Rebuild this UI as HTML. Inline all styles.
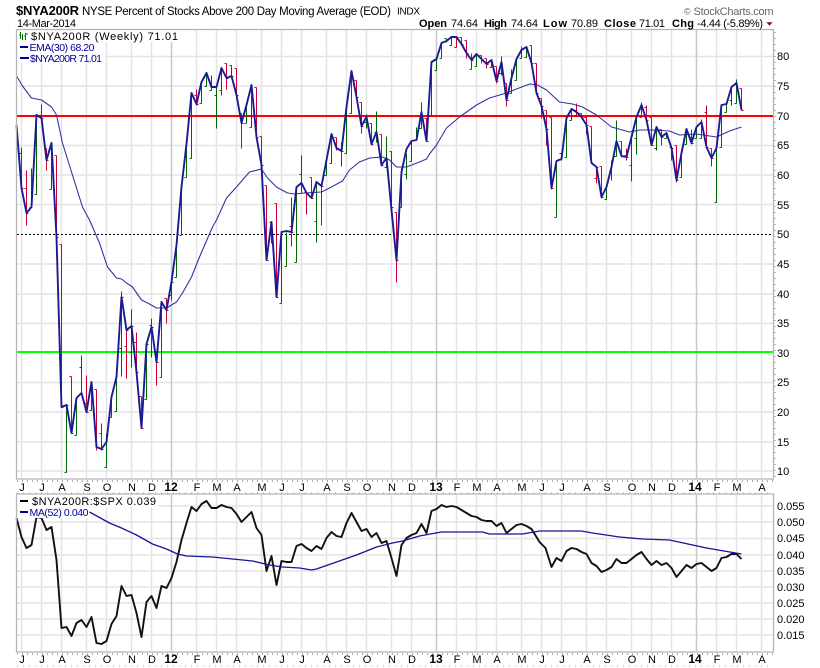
<!DOCTYPE html>
<html>
<head>
<meta charset="utf-8">
<title>$NYA200R</title>
<style>
html,body{margin:0;padding:0;background:#fff}
svg{display:block}
text{font-family:"Liberation Sans",Arial,sans-serif;font-size:11px;fill:#000}
</style>
</head>
<body>
<svg width="820" height="668" viewBox="0 0 820 668" xmlns="http://www.w3.org/2000/svg">
<rect width="820" height="668" fill="#fff"/>
<!-- grid -->
<path fill="none" stroke="#e4e4e4" stroke-width="1.5" d="M21.5 30V478M41.5 30V478M61.5 30V478M86.5 30V478M106.5 30V478M131.5 30V478M151.5 30V478M196.5 30V478M216.5 30V478M236.5 30V478M261.5 30V478M281.5 30V478M301.5 30V478M326.5 30V478M346.5 30V478M366.5 30V478M391.5 30V478M411.5 30V478M456.5 30V478M476.5 30V478M496.5 30V478M521.5 30V478M541.5 30V478M561.5 30V478M586.5 30V478M606.5 30V478M631.5 30V478M651.5 30V478M671.5 30V478M716.5 30V478M736.5 30V478M761.5 30V478
M21.5 495V651M41.5 495V651M61.5 495V651M86.5 495V651M106.5 495V651M131.5 495V651M151.5 495V651M196.5 495V651M216.5 495V651M236.5 495V651M261.5 495V651M281.5 495V651M301.5 495V651M326.5 495V651M346.5 495V651M366.5 495V651M391.5 495V651M411.5 495V651M456.5 495V651M476.5 495V651M496.5 495V651M521.5 495V651M541.5 495V651M561.5 495V651M586.5 495V651M606.5 495V651M631.5 495V651M651.5 495V651M671.5 495V651M716.5 495V651M736.5 495V651M761.5 495V651
M17 56.5H773M17 86H773M17 145.5H773M17 175H773M17 204.5H773M17 264H773M17 294H773M17 323.5H773M17 382.5H773M17 412H773M17 442H773M17 471H773
M17 506H773M17 522H773M17 538.5H773M17 555H773M17 571H773M17 587H773M17 603H773M17 619H773M17 635H773"/>
<path fill="none" stroke="#c8c8c8" stroke-width="1.5" d="M171.5 30V478M436.5 30V478M696.5 30V478M171.5 495V651M436.5 495V651M696.5 495V651"/>
<!-- thresholds -->
<path fill="none" stroke="#000" stroke-width="1" stroke-dasharray="2 2" d="M17 234.5H773"/>
<path fill="none" stroke="#ff0000" stroke-width="2" d="M16 116H773"/>
<path fill="none" stroke="#00ff00" stroke-width="2" d="M16 352H773"/>
<!-- bars -->
<g transform="translate(-.5,.5)" fill="none" stroke-width="1">
<path stroke="#cc0033" d="M17 124V130M22 147V188M20 153h2M22 188h2M27 170V225M25 188h2M27 213h2M42 104V120M40 115h2M42 118h2M47 148V170M45 148h2M47 160h2M57 155V237M55 155h2M57 237h2M62 244V407M60 244h2M62 407h2M72 376V433M70 376h2M72 433h2M87 375V412M85 403h2M87 412h2M97 389V450M95 389h2M97 447h2M102 423V450M100 433h2M102 449h2M127 330V378M125 346h2M127 330h2M137 332V372M135 342h2M137 372h2M142 396V428M140 396h2M142 428h2M157 351V385M155 351h2M157 362h2M167 298V323M165 298h2M167 310h2M197 89V105M195 95h2M197 104h2M227 63V89M225 63h2M227 78h2M237 68V97M235 68h2M237 95h2M242 113V148M240 113h2M242 123h2M257 87V137M255 87h2M257 137h2M262 136V167M260 136h2M262 165h2M267 185V260M265 185h2M267 260h2M277 203V297M275 203h2M277 297h2M292 197V246M290 226h2M292 232h2M307 192V214M305 192h2M307 193h2M312 177V198M310 177h2M312 198h2M322 185V225M320 185h2M322 186h2M337 137V150M335 137h2M337 148h2M342 142V166M340 150h2M342 151h2M357 80V97M355 80h2M357 97h2M362 102V133M360 102h2M362 126h2M372 123V145M370 123h2M372 144h2M382 134V166M380 134h2M382 165h2M392 151V207M390 151h2M392 207h2M397 212V282M395 212h2M397 260h2M427 118V141M425 118h2M427 141h2M457 37V47M455 47h2M457 37h2M462 37V45M460 37h2M462 44h2M467 40V58M465 40h2M467 53h2M472 53V69M470 69h2M472 60h2M482 55V63M480 55h2M482 59h2M487 58V68M485 58h2M487 64h2M497 66V83M495 66h2M497 81h2M507 83V106M505 83h2M507 100h2M532 45V63M530 45h2M532 63h2M537 63V93M535 63h2M537 93h2M542 98V118M540 98h2M542 106h2M547 110V145M545 110h2M547 129h2M552 117V189M550 117h2M552 188h2M577 103V115M575 110h2M577 112h2M582 113V118M580 113h2M582 117h2M587 117V134M585 117h2M587 125h2M592 126V163M590 126h2M592 163h2M597 167V183M595 178h2M597 167h2M602 166V198M600 166h2M602 197h2M622 141V157M620 141h2M622 156h2M627 148V160M625 155h2M627 157h2M647 105V120M645 107h2M647 120h2M652 117V145M650 117h2M652 145h2M662 129V145M660 129h2M662 137h2M672 145V160M670 147h2M672 148h2M677 145V182M675 145h2M677 180h2M692 129V144M690 137h2M692 143h2M707 105V147M705 112h2M707 147h2M712 148V166M710 148h2M712 158h2M742 88V110M740 88h2M742 110h2"/>
<path stroke="#006600" d="M32 168V207M30 207h2M37 115V194M35 194h2M52 143V189M50 189h2M67 405V472M65 472h2M67 405h2M77 398V435M75 435h2M82 355V393M80 367h2M92 381V410M90 410h2M107 433V467M105 467h2M112 397V417M110 417h2M117 377V411M115 411h2M122 291V376M120 348h2M122 297h2M132 309V367M130 352h2M132 326h2M147 344V399M145 399h2M147 344h2M152 318V357M150 325h2M152 327h2M162 302V377M160 377h2M172 282V300M170 295h2M172 282h2M177 244V277M175 277h2M182 187V235M180 235h2M187 143V177M185 177h2M192 93V158M190 158h2M202 82V103M200 103h2M207 73V86M205 86h2M212 75V90M210 90h2M217 87V128M215 95h2M222 68V95M220 90h2M232 65V78M230 65h2M232 76h2M247 105V123M245 123h2M252 85V127M250 127h2M272 222V243M270 222h2M282 232V303M280 303h2M287 232V266M285 266h2M297 187V262M295 262h2M302 155V193M300 174h2M317 182V242M315 221h2M327 157V175M325 175h2M332 134V163M330 163h2M347 107V153M345 153h2M352 71V113M350 113h2M367 114V128M365 122h2M377 111V142M375 132h2M387 136V167M385 167h2M402 172V207M400 207h2M407 153V179M405 174h2M412 141V161M410 161h2M417 127V140M415 140h2M422 102V128M420 128h2M432 62V115M430 115h2M437 58V70M435 70h2M442 43V58M440 58h2M447 38V42M445 38h2M452 37V45M450 45h2M477 54V66M475 66h2M492 60V67M490 67h2M502 56V75M500 73h2M512 69V93M510 93h2M517 59V80M515 80h2M522 46V58M520 58h2M527 46V57M525 57h2M557 162V217M555 217h2M562 153V160M560 153h2M567 118V157M565 157h2M572 109V120M570 120h2M607 187V199M605 199h2M612 160V180M610 170h2M617 120V156M615 156h2M632 137V181M630 165h2M637 117V154M635 138h2M642 102V117M640 117h2M657 127V150M655 148h2M667 132V138M665 138h2M682 153V177M680 177h2M687 129V144M685 144h2M697 127V138M695 138h2M702 119V138M700 138h2M717 148V202M715 202h2M722 105V147M720 147h2M727 103V112M725 112h2M732 87V105M730 100h2M737 79V103M735 103h2"/>
</g>
<g transform="translate(-.5,0)" fill="none" stroke-linejoin="round">
<!-- EMA -->
<polyline stroke="#34349f" stroke-width="1.1" points="17,76 23,86 32,98 42,100 52,107 57,115 63,143 72,172 83,207 90,220 100,243 108,267 117,278 122,279 127,283 133,287 142,300 150,304 157,308 167,308 177,302 183,293 192,277 200,257 213,227 217,220 227,198 237,187 250,172 262,169 268,178 277,187 288,193 295,194 305,193 322,192 332,187 343,181 350,170 360,162 370,158 383,157 390,160 397,167 407,167 420,162 427,159 430,154 437,145 447,128 460,117 477,105 490,98 507,93 517,89 530,84 538,85 547,90 560,102 573,104 583,107 597,115 612,127 630,132 640,130 653,130 670,131 680,135 697,134 717,137 730,131 742,127"/>
<!-- Close -->
<polyline stroke="#1a1a96" stroke-width="1.9" points="17,125 22,188 27,213 32,207 37,115 42,118 47,160 52,143 57,237 62,407 67,405 72,433 77,398 82,393 87,412 92,382 97,447 102,449 107,442 112,397 117,377 122,297 127,330 132,326 137,372 142,428 147,344 152,327 157,362 162,302 167,310 172,282 177,245 182,187 187,144 192,93 197,104 202,82 207,73 212,87 217,87 222,68 227,78 232,76 237,95 242,123 247,105 252,85 257,137 262,165 267,260 272,222 277,297 282,232 287,231 292,232 297,187 302,183 307,193 312,198 317,182 322,186 327,160 332,134 337,148 342,151 347,107 352,71 357,97 362,126 367,117 372,144 377,132 382,165 387,158 392,210 397,260 402,172 407,149 412,141 417,140 422,112 427,141 432,62 437,59 442,43 447,41 452,37 457,37 462,44 467,53 472,60 477,54 482,59 487,64 492,60 497,81 502,62 507,100 512,78 517,59 522,50 527,47 532,63 537,93 542,106 547,129 552,188 557,161 562,159 567,118 572,109 577,112 582,117 587,125 592,163 597,167 602,197 607,187 612,167 617,141 622,156 627,157 632,137 637,117 642,105 647,120 652,145 657,127 662,137 667,133 672,148 677,180 682,153 687,129 692,143 697,127 702,122 707,147 712,158 717,148 722,105 727,104 732,87 737,83 742,110"/>
<!-- ratio -->
<polyline stroke="#111" stroke-width="1.9" points="17,518 22,537 27,548 32,545 37,517 42,518 47,530 52,527 57,560 62,628 67,627 72,636 77,623 82,620 87,627 92,617 97,643 102,644 107,641 112,624 117,616 122,586 127,596 132,595 137,613 142,637 147,602 152,596 157,608 162,586 167,588 172,578 177,562 182,540 187,523 192,507 197,511 202,504 207,501 212,508 217,508 222,505 227,507 232,508 237,514 242,522 247,517 252,512 257,528 262,535 267,571 272,556 277,585 282,561 287,562 292,562 297,546 302,544 307,548 312,551 317,546 322,549 327,538 332,532 337,536 342,537 347,523 352,513 357,522 362,531 367,529 372,537 377,533 382,543 387,541 392,558 397,576 402,545 407,538 412,535 417,533 422,524 427,533 432,511 437,509 442,505 447,507 452,506 457,507 462,510 467,513 472,516 477,517 482,520 487,521 492,521 497,526 502,523 507,533 512,529 517,525 522,524 527,526 532,529 537,537 540,542 546,548 552,567 557,558 562,561 567,551 572,548 577,549 582,552 587,554 592,563 597,566 602,572 607,570 612,567 617,559 622,563 627,563 632,559 637,555 642,552 647,559 652,565 657,561 662,565 667,563 672,568 677,577 682,571 687,565 692,568 697,564 702,563 707,567 712,571 717,568 722,558 727,557 732,554 737,554 742,559"/>
<!-- MA52 -->
<polyline stroke="#15159a" stroke-width="1.3" points="90,512 110,523 122,528 137,535 153,544 167,549 178,554 187,556 213,557 233,559 253,561 270,565 283,567 300,568 312,570 317,569 337,562 357,555 377,547 393,543 403,541 420,536 442,532 483,532 490,534 523,534 540,531 582,531 593,533 620,537 643,539 670,540 707,548 742,554"/>
</g>
<!-- legend backgrounds -->
<rect x="17" y="30" width="162" height="12" fill="#fff"/>
<rect x="17" y="30" width="88" height="33" fill="#fff"/>
<rect x="17" y="495" width="141" height="12" fill="#fff"/>
<rect x="17" y="495" width="72" height="23" fill="#fff"/>
<!-- frames -->
<path fill="none" stroke="#b4b4b4" stroke-width="1.3" d="M16.5 29.5H773.5V479H16.5ZM16.5 494H773.5V652H16.5Z"/>
<path fill="none" stroke="#aaa" stroke-width="2" stroke-dasharray="1 4" d="M17 481H773M17 654H773"/>
<path fill="none" stroke="#aaa" stroke-width="1" stroke-dasharray="1 5" d="M17 493H773M17 666H773"/>
<path fill="none" stroke="#bbb" stroke-width="2" stroke-dasharray="1 5" d="M775 32V478"/>
<!-- legend -->
<path fill="none" stroke="#008000" stroke-width="1" d="M20.5 32V39M19 35h1.5M25.5 33V40M24 36h1.5"/>
<path fill="none" stroke="#006600" stroke-width="1" d="M22.5 34V40M26 34h2"/>
<text x="31" y="40" textLength="147" lengthAdjust="spacing" fill="#111">$NYA200R (Weekly) 71.01</text>
<path stroke="#000099" stroke-width="2" d="M20 47h8"/>
<text x="29.5" y="51" textLength="65" lengthAdjust="spacing" style="font-size:10.5px;fill:#000099">EMA(30) 68.20</text>
<path stroke="#000099" stroke-width="2" d="M20 58h9"/>
<text x="30" y="62" textLength="72" lengthAdjust="spacing" style="font-size:10.5px;fill:#000099">$NYA200R 71.01</text>
<path stroke="#000" stroke-width="2" d="M20 501h8"/>
<text x="32" y="505" textLength="124" lengthAdjust="spacing">$NYA200R:$SPX 0.039</text>
<path stroke="#000099" stroke-width="2" d="M20 512h8"/>
<text x="29.5" y="516" textLength="59" lengthAdjust="spacing" style="font-size:10.5px;fill:#000099">MA(52) 0.040</text>
<!-- header -->
<text x="16" y="15" textLength="63" lengthAdjust="spacing" style="font-size:13px;font-weight:bold">$NYA200R</text>
<text x="82" y="15" textLength="309" lengthAdjust="spacing" style="font-size:11.5px">NYSE Percent of Stocks Above 200 Day Moving Average (EOD)</text>
<text x="397" y="14.5" textLength="23" lengthAdjust="spacing" style="font-size:10px">INDX</text>
<text x="17" y="27" textLength="59" lengthAdjust="spacing">14-Mar-2014</text>
<text x="419" y="27" textLength="28" lengthAdjust="spacing" font-weight="bold">Open</text>
<text x="451" y="27" textLength="27" lengthAdjust="spacing">74.64</text>
<text x="484" y="27" textLength="23" lengthAdjust="spacing" font-weight="bold">High</text>
<text x="511" y="27" textLength="27" lengthAdjust="spacing">74.64</text>
<text x="543" y="27" textLength="24" lengthAdjust="spacing" font-weight="bold">Low</text>
<text x="571" y="27" textLength="27" lengthAdjust="spacing">70.89</text>
<text x="604" y="27" textLength="32" lengthAdjust="spacing" font-weight="bold">Close</text>
<text x="639" y="27" textLength="26" lengthAdjust="spacing">71.01</text>
<text x="672" y="27" textLength="22" lengthAdjust="spacing" font-weight="bold">Chg</text>
<text x="697" y="27" textLength="66" lengthAdjust="spacing">-4.44 (-5.89%)</text>
<path fill="#800033" d="M766.5 22.3h6l-3 3.5z"/>
<text x="684" y="14.5" style="font-size:9px;fill:#666">©</text>
<text x="693.5" y="15" textLength="80" lengthAdjust="spacing" style="fill:#666">StockCharts.com</text>
<!-- right axis -->
<g>
<text x="777" y="60">80</text><text x="777" y="90">75</text><text x="777" y="120">70</text><text x="777" y="149">65</text><text x="777" y="179">60</text><text x="777" y="209">55</text><text x="777" y="238">50</text><text x="777" y="268">45</text><text x="777" y="298">40</text><text x="777" y="327">35</text><text x="777" y="357">30</text><text x="777" y="386">25</text><text x="777" y="416">20</text><text x="777" y="446">15</text><text x="777" y="475">10</text>
<text x="777" y="510">0.055</text><text x="777" y="526">0.050</text><text x="777" y="542">0.045</text><text x="777" y="559">0.040</text><text x="777" y="575">0.035</text><text x="777" y="591">0.030</text><text x="777" y="607">0.025</text><text x="777" y="623">0.020</text><text x="777" y="639">0.015</text>
</g>
<!-- month labels -->
<g text-anchor="middle">
<text x="22" y="491">J</text><text x="42" y="491">J</text><text x="62" y="491">A</text><text x="87" y="491">S</text><text x="107" y="491">O</text><text x="132" y="491">N</text><text x="152" y="491">D</text><text x="171" y="491" style="font-size:12px;font-weight:bold">12</text><text x="197" y="491">F</text><text x="217" y="491">M</text><text x="237" y="491">A</text><text x="262" y="491">M</text><text x="282" y="491">J</text><text x="302" y="491">J</text><text x="327" y="491">A</text><text x="347" y="491">S</text><text x="367" y="491">O</text><text x="392" y="491">N</text><text x="412" y="491">D</text><text x="436" y="491" style="font-size:12px;font-weight:bold">13</text><text x="457" y="491">F</text><text x="477" y="491">M</text><text x="497" y="491">A</text><text x="522" y="491">M</text><text x="542" y="491">J</text><text x="562" y="491">J</text><text x="587" y="491">A</text><text x="607" y="491">S</text><text x="632" y="491">O</text><text x="652" y="491">N</text><text x="672" y="491">D</text><text x="695" y="491" style="font-size:12px;font-weight:bold">14</text><text x="717" y="491">F</text><text x="737" y="491">M</text><text x="762" y="491">A</text>
<text x="22" y="663">J</text><text x="42" y="663">J</text><text x="62" y="663">A</text><text x="87" y="663">S</text><text x="107" y="663">O</text><text x="132" y="663">N</text><text x="152" y="663">D</text><text x="171" y="663" style="font-size:12px;font-weight:bold">12</text><text x="197" y="663">F</text><text x="217" y="663">M</text><text x="237" y="663">A</text><text x="262" y="663">M</text><text x="282" y="663">J</text><text x="302" y="663">J</text><text x="327" y="663">A</text><text x="347" y="663">S</text><text x="367" y="663">O</text><text x="392" y="663">N</text><text x="412" y="663">D</text><text x="436" y="663" style="font-size:12px;font-weight:bold">13</text><text x="457" y="663">F</text><text x="477" y="663">M</text><text x="497" y="663">A</text><text x="522" y="663">M</text><text x="542" y="663">J</text><text x="562" y="663">J</text><text x="587" y="663">A</text><text x="607" y="663">S</text><text x="632" y="663">O</text><text x="652" y="663">N</text><text x="672" y="663">D</text><text x="695" y="663" style="font-size:12px;font-weight:bold">14</text><text x="717" y="663">F</text><text x="737" y="663">M</text><text x="762" y="663">A</text>
</g>
</svg>
</body>
</html>
